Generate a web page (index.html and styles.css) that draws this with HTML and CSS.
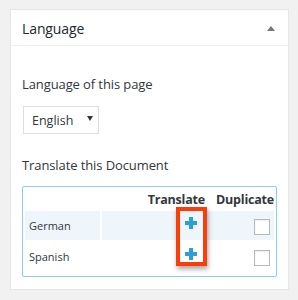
FILE: index.html
```html
<!DOCTYPE html>
<html>
<head>
<meta charset="utf-8">
<link rel="stylesheet" href="styles.css">
</head>
<body>
<div class="panel">
  <div class="panel-head">
    <span class="panel-title">Language</span>
    <span class="toggle"></span>
  </div>
  <div class="panel-body">
    <p class="label first">Language of this page</p>
    <div class="select"><span>English</span><span class="caret"></span></div>
    <p class="label second">Translate this Document</p>
    <div class="tbl">
      <div class="thead">
        <span class="th-translate">Translate</span>
        <span class="th-dup">Duplicate</span>
      </div>
      <div class="row alt">
        <div class="name">German</div>
        <div class="actions">
          <svg class="plus" viewBox="0 0 12 12" width="12" height="12"><path d="M4 0h4v4h4v4h-4v4h-4v-4h-4v-4h4z" fill="#2e9fd4"/></svg>
          <span class="check"></span>
        </div>
      </div>
      <div class="row">
        <div class="name">Spanish</div>
        <div class="actions">
          <svg class="plus" viewBox="0 0 12 12" width="12" height="12"><path d="M4 0h4v4h4v4h-4v4h-4v-4h-4v-4h4z" fill="#2e9fd4"/></svg>
          <span class="check"></span>
        </div>
      </div>
      <div class="highlight"></div>
    </div>
  </div>
</div>
</body>
</html>
```

FILE: styles.css
```css
* { box-sizing: border-box; }
html, body { margin: 0; padding: 0; }
body {
  background: #f1f1f1;
  padding: 9px 10px;
  font-family: "Open Sans", "Noto Sans", sans-serif;
  color: #32373c;
}
.panel {
  width: 279px;
  height: 281px;
  background: #fff;
  border: 1px solid #e5e5e5;
}
.panel-head {
  height: 36px;
  border-bottom: 1px solid #eee;
  display: flex;
  align-items: center;
  justify-content: space-between;
  padding: 1px 13px 0 11px;
}
.panel-title {
  font-size: 14px;
  color: #23282d;
  letter-spacing: -0.1px;
}
.toggle {
  width: 0; height: 0;
  border-left: 4px solid transparent;
  border-right: 4px solid transparent;
  border-bottom: 5px solid #72777c;
}
.panel-body { padding: 0 11px 0 11px; }
.label {
  margin: 0;
  font-size: 13px;
  color: #32373c;
  letter-spacing: -0.1px;
}
.label.first { padding-top: 28px; line-height: 20px; }
.select {
  margin-top: 12px;
  margin-left: 1px;
  width: 76px;
  height: 28px;
  border: 1px solid #ddd;
  display: flex;
  align-items: center;
  justify-content: space-between;
  padding: 0 5px 0 8px;
  font-size: 12.5px;
  color: #32373c;
}
.caret {
  width: 0; height: 0;
  border-left: 3px solid transparent;
  border-right: 3px solid transparent;
  border-top: 5px solid #32373c;
  margin-top: -4px;
}
.label.second { margin-top: 21px; line-height: 20px; }
.tbl {
  position: relative;
  margin-top: 11px;
  width: 255px;
  height: 91px;
  border: 1px solid #8fcbea;
  border-radius: 2px;
  padding: 0 2px 2px 2px;
}
.thead {
  height: 24px;
  display: flex;
  align-items: center;
  justify-content: flex-end;
  font-weight: bold;
  font-size: 12.5px;
  color: #32373c;
  gap: 11px;
  letter-spacing: -0.2px;
}
.row {
  display: flex;
  gap: 2px;
  height: 29px;
  margin-bottom: 2px;
}
.row.alt .name, .row.alt .actions { background: #eef6fc; }
.name {
  width: 75px;
  font-size: 11px;
  color: #32373c;
  display: flex;
  align-items: center;
  padding-left: 4px;
}
.actions {
  flex: 1;
  display: flex;
  align-items: center;
  padding-left: 83px;
  padding-right: 4px;
}
.plus { margin-top: -6px; }
.check {
  margin-left: auto;
  width: 16px;
  height: 16px;
  border: 1px solid #b4b9be;
  background: #fff;
  box-shadow: inset 0 1px 2px rgba(0,0,0,.07);
  margin-top: 3px;
}
.highlight {
  position: absolute;
  left: 153px;
  top: 20px;
  width: 31px;
  height: 59px;
  border: 4px solid #fb3d0a;
  box-shadow: 1px 3px 5px rgba(0,0,0,.35);
}
```
